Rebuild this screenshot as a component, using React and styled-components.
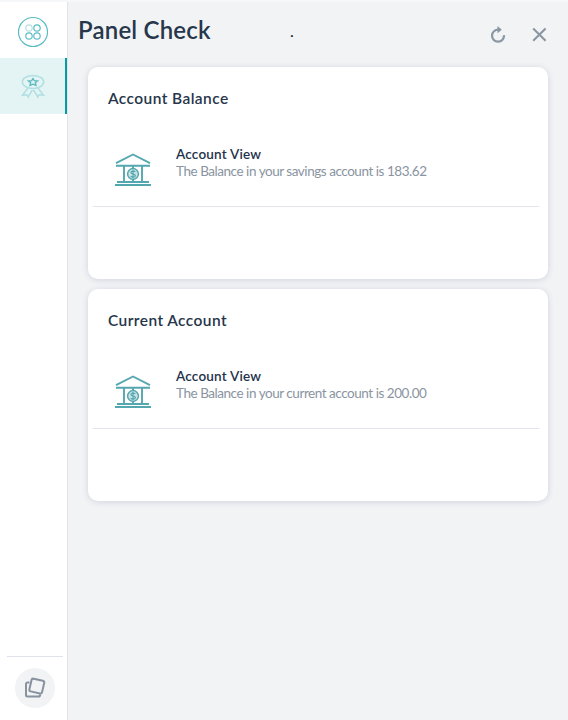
import React from "react";
import styled, { createGlobalStyle } from "styled-components";

const GlobalStyle = createGlobalStyle`
  * { box-sizing: border-box; }
  body { margin: 0; background: #f1f3f5; font-family: Lato, "Open Sans", sans-serif; color: #27364a; }
  svg { display: block; flex: none; }
`;

const Shell = styled.div`
  display: flex;
  height: 720px;
  width: 568px;
  overflow: hidden;
  border-top: 2px solid #f6f7f8;
`;

const Sidebar = styled.nav`
  width: 68px;
  display: flex;
  flex-direction: column;
  background: #fff;
  border-right: 1px solid #e3e4ea;
`;

const NavItem = styled.div`
  height: 56px;
  display: flex;
  align-items: center;
  padding-left: ${(p) => (p.$active ? "20px" : "17px")};
  padding-top: ${(p) => (p.$active ? "0" : "4px")};
  background: ${(p) => (p.$active ? "#e4f4f4" : "#fff")};
  border-right: ${(p) => (p.$active ? "2px solid #089aa4" : "none")};
`;

const SidebarFooter = styled.div`
  margin: auto 4px 0 7px;
  height: 64px;
  border-top: 1px solid #e1e3ec;
  padding: 11px 0 0 8px;
`;

const RoundButton = styled.div`
  width: 40px;
  height: 40px;
  border-radius: 50%;
  background: #f1f3f5;
  display: grid;
  place-items: center;
`;

const Main = styled.main`
  flex: 1;
  display: flex;
  flex-direction: column;
`;

const Header = styled.header`
  height: 65px;
  display: flex;
  padding: 12px 21px 0 10px;
`;

const Title = styled.h1`
  margin: 0;
  width: 212px;
  font-size: 24px;
  line-height: 32px;
  font-weight: 600;
  letter-spacing: 0.2px;
`;

const Mark = styled.span`
  font-size: 16px;
  line-height: 34px;
  color: #101820;
`;

const Actions = styled.div`
  margin-left: auto;
  display: flex;
  gap: 24px;
  padding-top: 12px;
`;

const Cards = styled.div`
  display: flex;
  flex-direction: column;
  gap: 10px;
  padding: 0 20px;
`;

const Card = styled.section`
  height: 212px;
  background: #fff;
  border-radius: 10px;
  box-shadow: 0 1px 6px rgba(50, 55, 100, 0.16);
`;

const CardTitle = styled.h2`
  margin: 0;
  padding: 21px 20px 0;
  font-size: 15.5px;
  line-height: 20px;
  font-weight: 600;
  letter-spacing: 0.42px;
`;

const AccountRow = styled.div`
  margin: 28px 9px 0 5px;
  height: 71px;
  display: flex;
  gap: 24px;
  padding: 10px 0 0 21px;
  border-bottom: 1px solid #e4e5ec;
`;

const AccountText = styled.div`
  font-size: 13.5px;
  line-height: 17px;
  letter-spacing: -0.46px;
  color: #8a949f;
  white-space: nowrap;
`;

const AccountName = styled.div`
  font-weight: 600;
  letter-spacing: 0.2px;
  color: #24324a;
`;

const BankIcon = () => (
  <svg width="38" height="48" viewBox="0 -0.7 38 48" fill="none" stroke="#55a7af" strokeWidth="1.9">
    <path d="M2 16.500 19 7.800l17 8.700" />
    <path d="M2 19h34M10 19v16M28 19v16M19 19v16M3 35.300h32" />
    <path d="M1 38.200h36" strokeWidth="2" />
    <circle cx="19" cy="27.300" r="5.400" fill="#cbe5e7" strokeWidth="1.500" />
    <path d="M21.300 25.200c-1-1.200-4.400-1-4.400.7 0 2 4.500.9 4.500 3 0 1.900-3.500 1.900-4.700.5M19 23v8.600" strokeWidth="1.200" />
  </svg>
);

const GridIcon = () => (
  <svg width="32" height="32" viewBox="0 0 32 32" fill="none" stroke="#5bbdc4" strokeWidth="1.2">
    <circle cx="16" cy="16" r="14.500" />
    <circle cx="12" cy="12" r="3.200" stroke="#b5e1e4" />
    <circle cx="20" cy="12" r="3.200" />
    <circle cx="12" cy="20" r="3.200" />
    <circle cx="20" cy="20" r="3.200" />
  </svg>
);

const BadgeIcon = () => (
  <svg width="26" height="26" viewBox="0 0 26 26" fill="none" stroke="#b0dfe3" strokeWidth="1.5">
    <ellipse cx="13" cy="9" rx="10.700" ry="6.500" />
    <path d="m8 15-5.500 7.200 4.300-.5 1.400 2.300 4.200-7M18 15l5.500 7.200-4.300-.5-1.400 2.300-4.200-7" />
    <path d="m13 5.500 1.300 2.200 3.300.3-2.300 1.800.7 2.500-3-1.200-3 1.200.7-2.500L8.400 8l3.300-.3Z" stroke="#5bb8c0" strokeWidth="1.3" />
  </svg>
);

const StackIcon = () => (
  <svg width="22" height="22" viewBox="0 0 22 22" fill="none" stroke="#87929e" strokeWidth="2" strokeLinejoin="round">
    <path d="M5.500 5.500H3.400Q2 5.500 2 7v11Q2 19.500 3.500 19.500h11Q16 19.500 16.300 17.500" />
    <rect x="6.300" y="2.600" width="13" height="13" rx="1.800" transform="rotate(13 12.800 9.100)" />
  </svg>
);

const RefreshIcon = () => (
  <svg width="18" height="18" viewBox="0 0 18 18" fill="none" stroke="#8b96a3" strokeWidth="2.2">
    <path d="M9.500 3.700A6 6 0 1 0 15 9.200" />
    <path d="M8.500 0 12.800 3.700l-4.300 3.500Z" fill="#8b96a3" stroke="none" />
  </svg>
);

const CloseIcon = () => (
  <svg width="16" height="18" viewBox="0 0 16 18" stroke="#8b96a3" strokeWidth="2.1">
    <path d="m2.200 2.400 12.400 12.400m0-12.400L2.200 14.800" />
  </svg>
);

const accounts = [
  { title: "Account Balance", text: "The Balance in your savings account is 183.62" },
  { title: "Current Account", text: "The Balance in your current account is 200.00" },
];

export default function App() {
  return (
    <>
      <GlobalStyle />
      <Shell>
        <Sidebar>
          <NavItem><GridIcon /></NavItem>
          <NavItem $active><BadgeIcon /></NavItem>
          <SidebarFooter>
            <RoundButton><StackIcon /></RoundButton>
          </SidebarFooter>
        </Sidebar>
        <Main>
          <Header>
            <Title>Panel Check</Title>
            <Mark>.</Mark>
            <Actions><RefreshIcon /><CloseIcon /></Actions>
          </Header>
          <Cards>
            {accounts.map((account) => (
              <Card key={account.title}>
                <CardTitle>{account.title}</CardTitle>
                <AccountRow>
                  <BankIcon />
                  <AccountText>
                    <AccountName>Account View</AccountName>
                    {account.text}
                  </AccountText>
                </AccountRow>
              </Card>
            ))}
          </Cards>
        </Main>
      </Shell>
    </>
  );
}
